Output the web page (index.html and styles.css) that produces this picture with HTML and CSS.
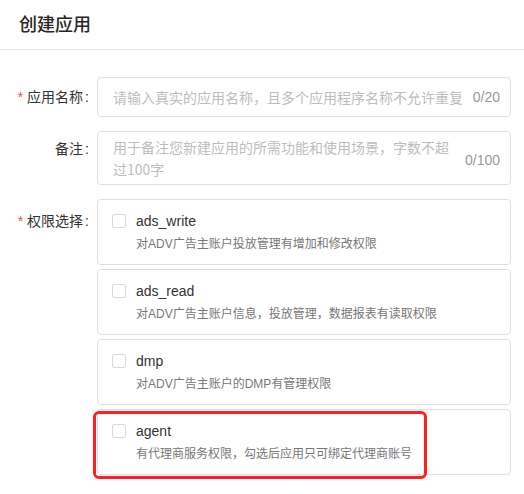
FILE: index.html
```html
<!DOCTYPE html>
<html lang="zh-CN">
<head>
<meta charset="utf-8">
<title>创建应用</title>
<link rel="stylesheet" href="styles.css">
</head>
<body>
<div class="page">
  <header class="header">
    <h1 class="title">创建应用</h1>
  </header>
  <form class="form">
    <div class="row">
      <label class="label label-required label-r1">应用名称</label>
      <div class="control">
        <div class="field field-input">
          <input class="input" type="text" placeholder="请输入真实的应用名称，且多个应用程序名称不允许重复">
          <span class="count">0/20</span>
        </div>
      </div>
    </div>
    <div class="row">
      <label class="label label-r2">备注</label>
      <div class="control">
        <div class="field field-textarea">
          <textarea class="textarea" placeholder="用于备注您新建应用的所需功能和使用场景，字数不超过100字"></textarea>
          <span class="count count-push">0/100</span>
        </div>
      </div>
    </div>
    <div class="row">
      <label class="label label-required label-r3">权限选择</label>
      <div class="control">
        <div class="options">
          <label class="option">
            <span class="option-head"><input class="checkbox" type="checkbox"><span class="option-name">ads_write</span></span>
            <span class="option-desc">对ADV广告主账户投放管理有增加和修改权限</span>
          </label>
          <label class="option">
            <span class="option-head"><input class="checkbox" type="checkbox"><span class="option-name">ads_read</span></span>
            <span class="option-desc">对ADV广告主账户信息，投放管理，数据报表有读取权限</span>
          </label>
          <label class="option">
            <span class="option-head"><input class="checkbox" type="checkbox"><span class="option-name">dmp</span></span>
            <span class="option-desc">对ADV广告主账户的DMP有管理权限</span>
          </label>
          <label class="option">
            <span class="option-head"><input class="checkbox" type="checkbox"><span class="option-name">agent</span></span>
            <span class="option-desc">有代理商服务权限，勾选后应用只可绑定代理商账号</span>
            <span class="highlight"></span>
          </label>
        </div>
      </div>
    </div>
  </form>
</div>
</body>
</html>
```
FILE: styles.css
```css
* { box-sizing: border-box; }

body {
  margin: 0;
  background: #fff;
  color: #333;
  font-family: "Liberation Sans", "Noto Sans CJK SC", sans-serif;
}

.header {
  height: 50px;
  padding: 0 0 3px 19px;
  display: flex;
  align-items: center;
  border-bottom: 1px solid #e6e6e6;
}

.title {
  margin: 0;
  font-family: "Noto Sans CJK SC", sans-serif;
  font-size: 18px;
  font-weight: 500;
  line-height: 24px;
  color: #262626;
}

.form {
  padding: 27px 13px 0 0;
}

.row {
  display: flex;
  margin-bottom: 14px;
}

.label {
  flex: none;
  width: 97px;
  padding-right: 8px;
  text-align: right;
  font-size: 14px;
  line-height: 22px;
  color: #333;
  white-space: nowrap;
}

.label::after {
  content: ":";
  margin-left: 2px;
}

.label-required::before {
  content: "*";
  margin-right: 4px;
  color: #f5484a;
  font-family: "Liberation Sans", sans-serif;
}

.label-r1 { padding-top: 9px; }
.label-r2 { padding-top: 7px; }
.label-r3 { padding-top: 11px; }

.control {
  flex: 1;
  min-width: 0;
}

.field {
  display: flex;
  align-items: center;
  border: 1px solid #dcdfe6;
  border-radius: 4px;
  padding: 0 10px 0 15px;
  background: #fff;
}

.field-input { height: 40px; }

.field-textarea {
  height: 54px;
}

.input,
.textarea {
  border: 0;
  outline: 0;
  padding: 0;
  margin: 0;
  background: transparent;
  color: #333;
  font-family: "Noto Sans CJK SC", sans-serif;
  font-size: 14px;
}

.input {
  flex: 1;
  min-width: 0;
  height: 22px;
  line-height: 22px;
}

.textarea {
  flex: none;
  width: 342px;
  height: 52px;
  padding: 4px 0;
  line-height: 22px;
  resize: none;
  overflow: hidden;
  align-self: stretch;
}

.input::placeholder,
.textarea::placeholder {
  color: #bdbdbd;
}

.count {
  flex: none;
  margin-left: 11px;
  font-size: 14px;
  line-height: 22px;
  color: #999;
}

.count-push {
  margin-left: auto;
  padding-top: 3px;
}

.options {
  display: flex;
  flex-direction: column;
  gap: 4px;
}

.option {
  position: relative;
  display: block;
  border: 1px solid #dcdfe6;
  border-radius: 4px;
  padding: 11px 14px 10px;
}

.option-head {
  display: flex;
  align-items: center;
  height: 20px;
}

.checkbox {
  appearance: none;
  -webkit-appearance: none;
  flex: none;
  width: 14px;
  height: 14px;
  margin: 0 10px 0 0;
  border: 1px solid #d6d9df;
  border-radius: 2px;
  background: #fff;
}

.option-name {
  font-size: 14px;
  line-height: 20px;
  color: #333;
}

.option-desc {
  display: block;
  margin-top: 3px;
  padding-left: 24px;
  font-family: "Liberation Sans", "Noto Sans CJK SC", sans-serif;
  font-size: 12px;
  line-height: 20px;
  color: #777;
}

.highlight {
  position: absolute;
  left: -5px;
  top: 1px;
  width: 334px;
  height: 68px;
  border: 3px solid #ff1f1f;
  border-radius: 6px;
  pointer-events: none;
}
```
